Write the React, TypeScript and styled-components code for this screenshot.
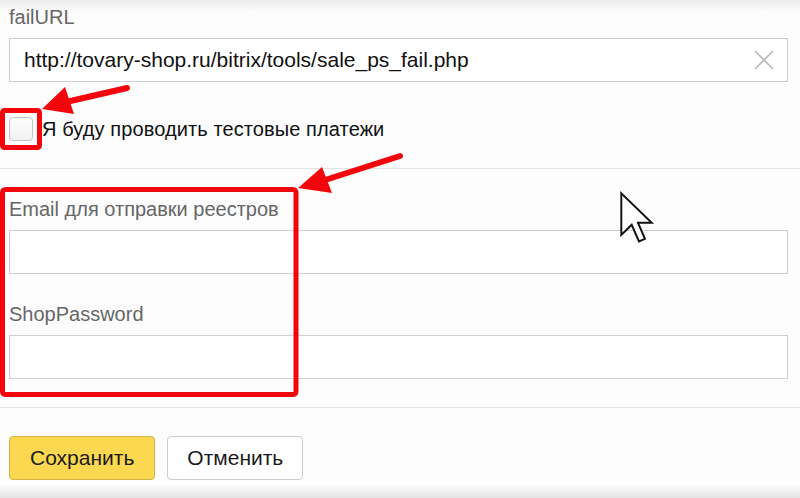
import React from 'react';
import styled, { createGlobalStyle } from 'styled-components';

const GlobalStyle = createGlobalStyle`
  html, body {
    margin: 0;
    padding: 0;
  }
  body {
    font-family: "Liberation Sans", Arial, sans-serif;
    background: #fff;
  }
`;

const Page = styled.div`
  position: relative;
  width: 800px;
  height: 498px;
  overflow: hidden;
  background: linear-gradient(
    to bottom,
    #ececec 0px,
    #fcfcfd 12px,
    #fdfdfe 484px,
    #e4e4e4 498px
  );
`;

const Section = styled.div<{ $top: number }>`
  padding: ${p => p.$top}px 12px 0 9px;
`;

const Label = styled.div`
  font-size: 20px;
  line-height: 20px;
  color: #666;
  margin-bottom: 11px;
`;

const Field = styled.div<{ $top?: number }>`
  margin-top: ${p => p.$top ?? 0}px;
`;

const InputBox = styled.div`
  height: 44px;
  box-sizing: border-box;
  border: 1px solid #cfcfcf;
  background: #fff;
  display: flex;
  align-items: center;
  padding: 0 14px;
  font-size: 21px;
  color: #111;
  white-space: nowrap;
`;

const ClearButton = styled.span`
  margin-left: auto;
  margin-right: -2px;
  display: flex;
  align-items: center;
`;

const CheckRow = styled.label`
  display: flex;
  align-items: center;
  gap: 9px;
  margin-top: 35px;
  font-size: 20px;
  letter-spacing: 0.1px;
  line-height: 24px;
  color: #111;
`;

const CheckBox = styled.span`
  width: 24px;
  height: 24px;
  box-sizing: border-box;
  border: 1px solid #c4c4c4;
  border-radius: 4px;
  background: linear-gradient(#fcfcfc, #f3f3f3);
`;

const Divider = styled.div<{ $top: number }>`
  height: 1px;
  background: #e2e2e2;
  margin-top: ${p => p.$top}px;
`;

const Buttons = styled.div`
  display: flex;
  gap: 12px;
  padding: 28px 0 0 9px;
`;

const Button = styled.button<{ $primary?: boolean }>`
  height: 44px;
  box-sizing: border-box;
  padding: 0 ${p => (p.$primary ? 20 : 19)}px;
  border-radius: 4px;
  font-family: "Liberation Sans", Arial, sans-serif;
  font-size: 21px;
  color: #1a1a1a;
  border: 1px solid ${p => (p.$primary ? '#d3b447' : '#cdcdcd')};
  background: ${p => (p.$primary ? '#fbd84f' : '#fff')};
`;

const Overlay = styled.svg`
  position: absolute;
  left: 0;
  top: 0;
  pointer-events: none;
`;

const App: React.FC = () => {
    return (
        <Page>
            <GlobalStyle />
            <Section $top={7}>
                <Label>failURL</Label>
                <InputBox>
                    http://tovary-shop.ru/bitrix/tools/sale_ps_fail.php
                    <ClearButton>
                        <svg width="22" height="22" viewBox="0 0 22 22">
                            <path d="M2 2 L20 20 M20 2 L2 20" stroke="#b9b9b9" strokeWidth="1.6" />
                        </svg>
                    </ClearButton>
                </InputBox>
                <CheckRow>
                    <CheckBox />
                    Я буду проводить тестовые платежи
                </CheckRow>
            </Section>

            <Divider $top={27} />

            <Section $top={30}>
                <Field>
                    <Label>Email для отправки реестров</Label>
                    <InputBox />
                </Field>
                <Field $top={30}>
                    <Label>ShopPassword</Label>
                    <InputBox />
                </Field>
            </Section>

            <Divider $top={28} />

            <Buttons>
                <Button $primary>Сохранить</Button>
                <Button>Отменить</Button>
            </Buttons>

            <Overlay width="800" height="498" viewBox="0 0 800 498">
                {/* red highlight frames */}
                <rect x="2.5" y="110.5" width="37" height="37" rx="2" fill="none" stroke="#f2060c" strokeWidth="5" />
                <rect x="2.5" y="189.5" width="293.5" height="205" rx="3" fill="none" stroke="#f2060c" strokeWidth="5" />

                {/* arrows */}
                <line x1="127" y1="88" x2="66" y2="102" stroke="#f2060c" strokeWidth="6" strokeLinecap="round" />
                <polygon points="42,109 65,87 74,114" fill="#f2060c" />
                <line x1="400" y1="156" x2="322" y2="181" stroke="#f2060c" strokeWidth="6" strokeLinecap="round" />
                <polygon points="298,188 322,167 332,193" fill="#f2060c" />

                {/* mouse cursor */}
                <g transform="translate(620 192) scale(2.6)">
                    <path
                        d="M0.5 0.5 L0.5 16.5 L4.5 12.6 L7.3 19 L9.6 18 L6.9 11.8 L12.2 11.8 Z"
                        fill="#fff"
                        stroke="#111"
                        strokeWidth="0.75"
                        strokeLinejoin="miter"
                    />
                </g>
            </Overlay>
        </Page>
    );
};

export default App;
